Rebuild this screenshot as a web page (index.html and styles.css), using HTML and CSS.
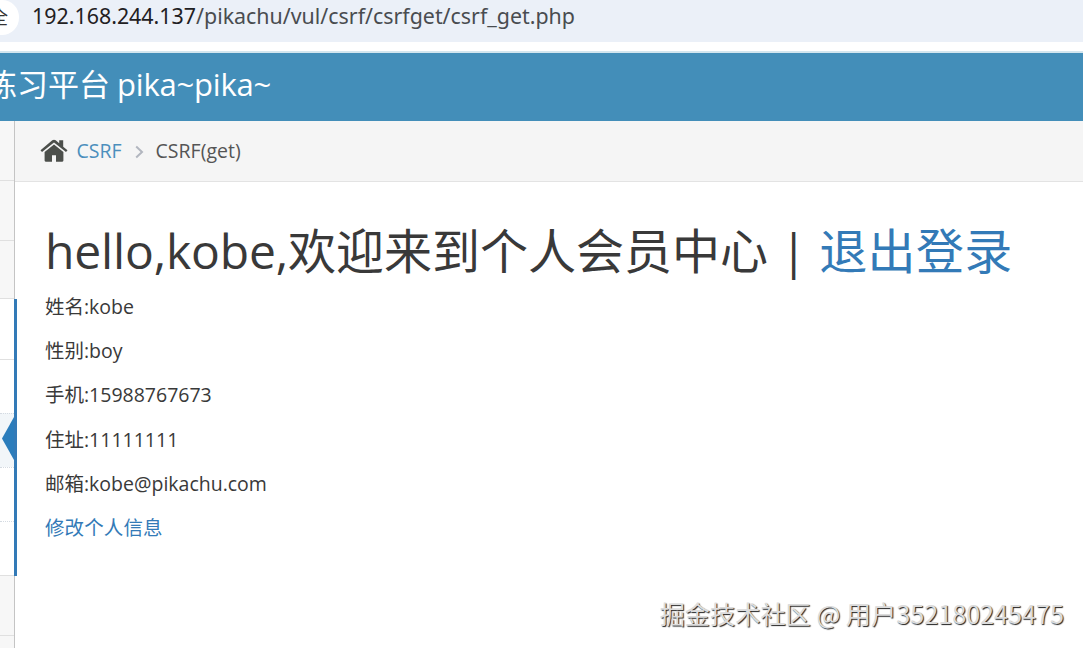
FILE: index.html
```html
<!DOCTYPE html>
<html lang="zh-CN">
<head>
    <meta charset="UTF-8">
    <meta name="viewport" content="width=device-width, initial-scale=1.0">
    <title>CSRF(get)</title>
    <link rel="stylesheet" href="styles.css">
</head>
<body>
    <div class="address-bar">
        <div class="security"><span>全</span></div>
        <div class="url"><span class="host">192.168.244.137</span><span class="path">/pikachu/vul/csrf/csrfget/csrf_get.php</span></div>
    </div>
    <div class="navbar">
        <div class="brand"><span class="brand-cn">练习平台</span><span class="brand-en">pika~pika~</span></div>
    </div>
    <div class="container">
        <div class="sidebar">
            <div class="item"></div>
            <div class="item"></div>
            <div class="item third"></div>
            <div class="open">
                <div class="item head"></div>
                <div class="sub first"></div>
                <div class="sub active"></div>
                <div class="sub"></div>
                <div class="sub last"></div>
            </div>
            <div class="item"></div>
        </div>
        <div class="main">
            <div class="breadcrumbs">
                <svg class="home" width="28" height="24" viewBox="0 0 28 24">
                    <path fill="#4c4f4b" d="M14 5.5 23.4 13V21.6Q23.4 22.7 22.3 22.7H16V16.3H12V22.7H5.7Q4.6 22.7 4.6 21.6V13Z"/>
                    <path fill="#4c4f4b" d="M.5 11.3 12.3 1.3Q14 0 15.7 1.3L19.2 4.3V1.2H23.2V7.7L27.5 11.3 26 13.1 14 3.5 2 13.1Z"/>
                </svg>
                <a class="crumb-link">CSRF</a>
                <svg class="arrow" width="9" height="14" viewBox="0 0 9 14">
                    <path fill="none" stroke="#b2b6bf" stroke-width="2" d="M1.2 1.5 7 7 1.2 12.5"/>
                </svg>
                <span class="crumb">CSRF(get)</span>
            </div>
            <div class="content">
                <h1><span class="hello">hello,kobe,</span><span class="welcome">欢迎来到个人会员中心</span><span class="bar">|</span><a class="logout">退出登录</a></h1>
                <p>姓名:kobe</p>
                <p>性别:boy</p>
                <p>手机:15988767673</p>
                <p>住址:11111111</p>
                <p>邮箱:kobe@pikachu.com</p>
                <p><a class="edit">修改个人信息</a></p>
            </div>
        </div>
    </div>
    <div class="watermark">掘金技术社区 @ 用户352180245475</div>
</body>
</html>
```

FILE: styles.css
```css
*{
    margin: 0;
    padding: 0;
    box-sizing: border-box;
}
body{
    width: 1083px;
    height: 648px;
    overflow: hidden;
    background: #fff;
    color: #393939;
    font-family: "Open Sans", "Noto Sans CJK SC", sans-serif;
    font-size: 19.5px;
    white-space: nowrap;
}
a{
    color: #337ab7;
    text-decoration: none;
}
.address-bar{
    display: flex;
    height: 42px;
    background: #ebf0f8;
}
.security{
    display: flex;
    justify-content: flex-end;
    width: 19px;
    height: 35px;
    padding-right: 11px;
    overflow: hidden;
    background: #fff;
    border-radius: 0 17px 17px 0;
    color: #333;
    font-size: 18px;
    line-height: 35px;
}
.url{
    padding-left: 13px;
    font-family: "Noto Sans", sans-serif;
    font-size: 21.4px;
    line-height: 32px;
}
.host{
    color: #1f2023;
}
.path{
    color: #494c50;
}
.navbar{
    height: 70px;
    margin-top: 9px;
    border-top: 2px solid #d3e6ef;
    background: #438eb9;
    color: #fff;
}
.brand{
    display: flex;
    gap: 7px;
    margin-left: -14px;
    font-size: 31px;
    line-height: 62px;
}
.brand-en{
    letter-spacing: -0.2px;
}
.container{
    display: flex;
    height: 527px;
    overflow: hidden;
}
.sidebar{
    width: 17px;
    background: linear-gradient(to right, #f7f7f7 14px, #c4c4c4 14px, #c4c4c4 15px, #fff 15px);
}
.item{
    width: 14px;
    height: 60px;
    border-bottom: 1px solid #e0e0e0;
}
.item.third{
    height: 58px;
}
.open{
    height: 277px;
    border-right: 3px solid #337ab7;
    background: #fff;
}
.open .head{
    height: 61px;
}
.sub{
    height: 54px;
    border-top: 1px dotted #d5dbe2;
}
.sub.first{
    height: 53px;
    border-top: none;
}
.sub.active{
    padding: 3px 0 0 2px;
    background: #f2f6f9;
}
.sub.active::before{
    content: "";
    display: block;
    width: 12px;
    height: 43px;
    background: #2b7dbc;
    clip-path: polygon(100% 0, 100% 100%, 0 50%);
}
.sub.last{
    height: 55px;
    border-bottom: 1px solid #e0e0e0;
}
.main{
    flex: 1;
}
.breadcrumbs{
    display: flex;
    align-items: center;
    height: 61px;
    margin-left: -2px;
    padding: 0 0 2px 25px;
    border-bottom: 1px solid #e3e3e3;
    background: #f5f5f5;
}
.home{
    margin-top: 1px;
}
.crumb-link{
    margin-left: 8.5px;
    color: #4c8fbd;
}
.arrow{
    margin: 3px 12px 0 13px;
}
.crumb{
    color: #555;
}
.content{
    padding: 36px 0 0 28px;
}
h1{
    display: flex;
    height: 67px;
    font-size: 48px;
    font-weight: 400;
    line-height: 66px;
}
.hello{
    letter-spacing: -0.15px;
}
.bar{
    width: 51px;
    text-align: center;
}
.logout{
    letter-spacing: 0.4px;
}
p{
    height: 44.2px;
    line-height: 44.2px;
}
.edit{
    letter-spacing: 0.1px;
}
.watermark{
    position: absolute;
    right: 19px;
    bottom: 17px;
    color: #dcdcdc;
    font-family: "Noto Sans CJK SC", sans-serif;
    font-size: 25.2px;
    line-height: 36px;
    text-shadow: 1px 1px 1px #222;
}
```
